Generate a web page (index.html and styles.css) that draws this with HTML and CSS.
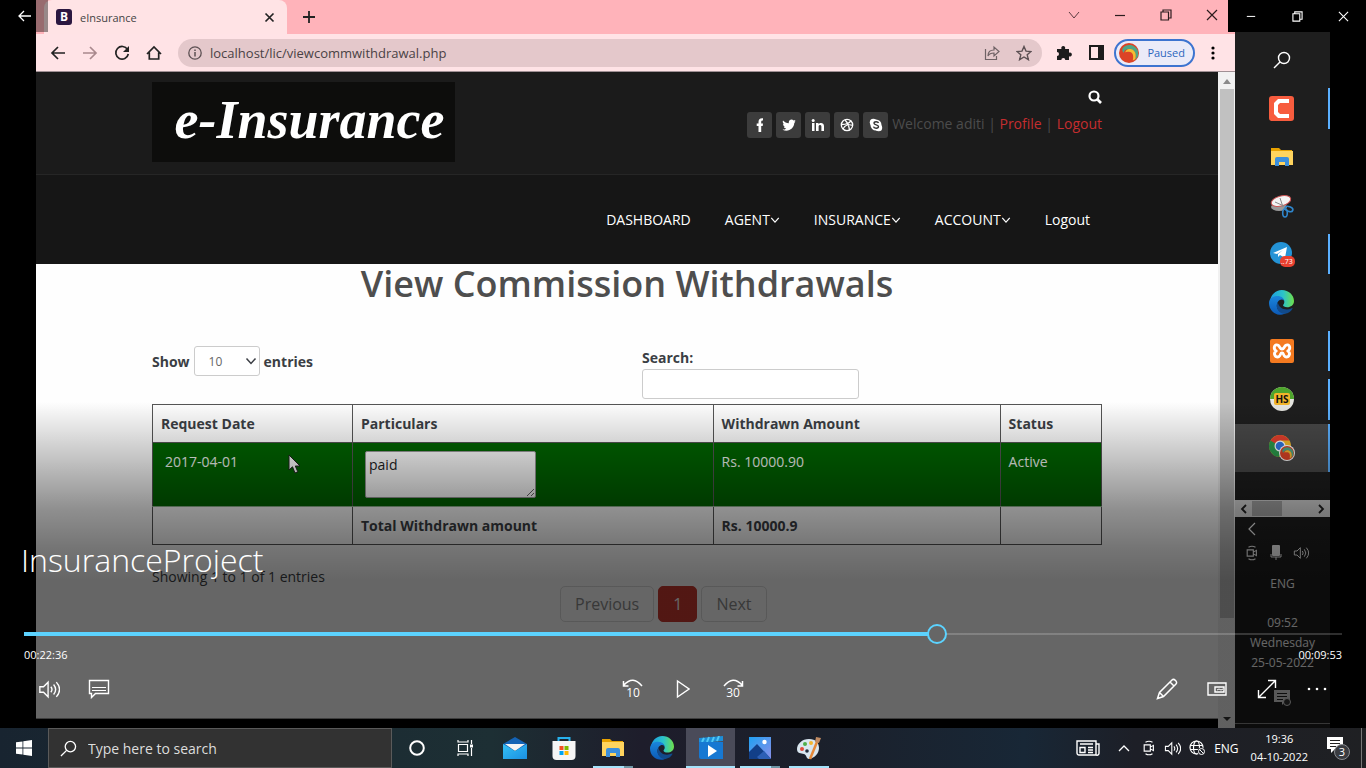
FILE: styles.css
```css
* { box-sizing: border-box; }
body {
  margin: 0;
  height: 100vh;
  display: flex;
  flex-direction: column;
  overflow: hidden;
  background: #000;
  font-family: "Open Sans", "Noto Sans", sans-serif;
  font-size: 14px;
}
button, input, select, textarea { font: inherit; color: inherit; margin: 0; }
svg { display: block; flex: none; }
a { text-decoration: none; }
.defs { position: absolute; width: 0; height: 0; }
.plain {
  border: 0;
  padding: 0;
  background: none;
  display: grid;
  place-items: center;
}

.stage {
  position: relative;
  flex: 1;
  min-height: 0;
  display: flex;
  padding: 0 36px;
}

/* Recorded browser window */
.browser {
  position: relative;
  flex: 1;
  min-width: 0;
  display: flex;
  flex-direction: column;
}
.tabstrip {
  display: flex;
  height: 34px;
  background: #ffb3ba;
  padding-left: 8px;
}
.tab {
  display: flex;
  align-items: center;
  gap: 8px;
  width: 243px;
  padding: 0 12px;
  background: #ffe3e5;
  border-radius: 8px 8px 0 0;
  font-size: 11px;
  color: #444;
}
.favicon {
  width: 16px;
  height: 16px;
  border-radius: 3px;
  background: #2b1740;
  color: #fff;
  font-size: 12px;
  font-weight: 700;
  line-height: 16px;
  text-align: center;
}
.tab-title { flex: 1; }
.newtab { width: 44px; }
.winbtns { display: flex; margin-left: auto; color: #2c1c1e; padding-bottom: 4px; }
.winbtns button { width: 46px; }
.toolbar {
  display: flex;
  align-items: center;
  height: 38px;
  padding: 0 12px 0 6px;
  background: #ffe3e6;
  border-bottom: 1px solid #a09094;
}
.nav-btn { width: 32px; height: 32px; }
.address {
  flex: 1;
  display: flex;
  align-items: center;
  gap: 8px;
  height: 28px;
  margin: 0 6px 0 8px;
  padding: 0 10px;
  border-radius: 14px;
  background: #e4c8cb;
}
.address .star { margin-left: 8px; }
.url { flex: 1; display: flex; }
.url input { flex: 1; border: 0; padding: 0; background: none; color: #4a4245; font-size: 13px; }
.profile {
  display: flex;
  align-items: center;
  gap: 8px;
  height: 28px;
  margin: 0 8px 0 2px;
  padding: 0 8px 0 3px;
  border: 2px solid #3d74d0;
  border-radius: 14px;
  background: #ebebf8;
  color: #2c66be;
  font-size: 11px;
}
.menu { width: 20px; }

.viewport { flex: 1; min-height: 0; display: flex; }
.page {
  flex: 1;
  margin-bottom: 9px;
  border-bottom: 1px solid #999;
  background: #fefefe;
  color: #3b3e44;
}
.container { max-width: 950px; margin: 0 auto; }
.site-top { background: #1b1b1b; border-bottom: 1px solid #262626; }
.top-row { display: flex; justify-content: space-between; padding: 10px 0 12px; }
.logo {
  width: 303px;
  height: 80px;
  padding-left: 12px;
  background: #0d0d0c;
  color: #fff;
  font: italic 700 54px/76px "Liberation Serif", serif;
  text-align: center;
}
.top-right {
  display: flex;
  flex-direction: column;
  align-items: flex-end;
  gap: 8px;
  padding-top: 8px;
  color: #4c4c4c;
}
.account { display: flex; align-items: center; gap: 4px; }
.account span { line-height: 20px; padding-bottom: 2px; }
.account span a { color: #c52d2f; }
.social {
  width: 25px;
  height: 26px;
  display: grid;
  place-items: center;
  border-radius: 3px;
  background: #3c3c3c;
}
.site-nav { background: #161616; }
.nav-row {
  display: flex;
  justify-content: flex-end;
  align-items: center;
  gap: 34px;
  height: 89px;
  padding-right: 12px;
}
.nav-row a { display: flex; align-items: center; color: #fff; }
.title {
  margin: 0;
  font-size: 36px;
  font-weight: 600;
  line-height: 40px;
  text-align: center;
  color: #4e4e4e;
}
.filters {
  display: grid;
  grid-template-columns: 1fr 1fr;
  gap: 30px;
  padding-top: 42px;
  font-weight: 700;
}
.length { display: flex; align-items: center; gap: 4px; height: 30px; }
.select-box { display: grid; align-items: center; width: 66px; font-weight: 400; }
.select-box > * { grid-area: 1 / 1; }
.select-box svg { justify-self: end; margin-right: 3px; pointer-events: none; }
.select-box select {
  appearance: none;
  height: 30px;
  padding-left: 14px;
  border: 1px solid #ccc;
  border-radius: 3px;
  background: #fff;
  color: #666;
  font-size: 12px;
}
.search { display: flex; flex-direction: column; line-height: 23px; }
.search input {
  width: 217px;
  height: 30px;
  border: 1px solid #ccc;
  border-radius: 3px;
  background: #fff;
}
.records {
  width: 100%;
  margin-top: 5px;
  border-collapse: collapse;
  table-layout: fixed;
  line-height: 21px;
}
.c-date { width: 200px; }
.c-part { width: 38%; }
.c-amount { width: 287px; }
.records th, .records td {
  height: 38px;
  padding: 8px;
  border: 1px solid #555;
  text-align: left;
  vertical-align: top;
}
.records tbody tr { background: #006400; color: #f0f5f0; }
.records td { border-top-color: #b5d0b5; border-bottom-color: #8fb58f; }
.records .date { padding-left: 12px; }
.records .note { padding-left: 12px; }
.records textarea {
  display: block;
  width: 171px;
  height: 47px;
  padding: 2px 3px;
  border: 1px solid #999;
  border-radius: 2px;
  background: #fff;
  color: #222;
}
.footer {
  display: grid;
  grid-template-columns: 400px 1fr;
  gap: 8px;
  padding-top: 22px;
}
.footer p { margin: 0; line-height: 20px; }
.pager { display: flex; gap: 4px; padding-top: 19px; }
.pager button {
  height: 36px;
  padding: 0 14px;
  border: 1px solid #ddd;
  border-radius: 5px;
  background: none;
  color: #8c8c8c;
  font-size: 16px;
}
.pager .current { border-color: #cc3a30; background: #cc3a30; color: #fff; }
.scroll {
  width: 17px;
  display: flex;
  flex-direction: column;
  align-items: center;
  background: #f1f1f1;
}
.scroll-thumb { flex: 1; width: 14px; margin-bottom: 93px; background: #c1c1c1; }
.pointer { position: absolute; left: 252px; top: 454px; }

/* Recorded vertical taskbar */
.rail {
  width: 95px;
  display: flex;
  flex-direction: column;
  padding-top: 36px;
  background: #1e1e1e;
  color: #fff;
  font-size: 12px;
}
.rail-apps { display: grid; grid-auto-rows: 1fr; height: 436px; }
.rail-apps span { display: grid; place-items: center; border-right: 2px solid transparent; margin: 4px 0; }
.rail-apps .open { border-right-color: #5bb0ff; }
.rail-apps .active { background: #484848; margin: 0; }
.badge-text { fill: #fff; font-size: 7px; }
.hs-text { fill: #111; font-size: 10px; font-weight: 700; text-anchor: middle; }
.rail-scroll {
  display: flex;
  align-items: center;
  height: 17px;
  margin-top: 28px;
  padding: 0 5px;
  background: #ddd;
}
.rail-scroll i { width: 30px; height: 15px; margin: 0 auto 0 4px; background: #aaa; }
.rail-tray {
  flex: 1;
  display: flex;
  flex-direction: column;
  align-items: center;
  margin-bottom: 4px;
  padding-top: 5px;
  border-bottom: 1px solid #888;
}
.rail-tray .collapse { align-self: flex-start; margin-left: 12px; }
.rail-icons { display: flex; align-items: center; gap: 11px; padding: 9px 12px 13px 0; }
.rail-lang { line-height: 20px; }
.rail-clock { padding: 19px 0 16px; line-height: 20px; text-align: center; }

/* Overlaid window caption and player controls */
.captionbar {
  position: absolute;
  inset: 0 0 auto 0;
  height: 32px;
  display: flex;
  justify-content: space-between;
  color: #fff;
}
.cap-back { width: 48px; border: 0; padding: 0; display: grid; place-items: center; background: rgba(0, 0, 0, .4); }
.cap-win { display: flex; background: #000; }
.cap-win button { width: 46px; }
.player {
  position: absolute;
  inset: auto 0 0 0;
  height: 326px;
  display: flex;
  flex-direction: column;
  justify-content: flex-end;
  padding: 0 24px 14px;
  color: #fff;
  background: linear-gradient(transparent 0, rgba(0, 0, 0, .44) 108px, rgba(0, 0, 0, .54) 146px, rgba(0, 0, 0, .6) 178px);
}
.player h2 { margin: 0 0 42px -3px; font-size: 32px; font-weight: 300; line-height: 44px; }
.seek {
  appearance: none;
  width: 100%;
  height: 20px;
  background:
    linear-gradient(#5cd3ff, #5cd3ff) left center / calc(var(--played) - 10px) 4px no-repeat,
    linear-gradient(90deg, transparent var(--played), rgba(255, 255, 255, .18) var(--played)) center / 100% 2px no-repeat;
}
.seek::-webkit-slider-thumb {
  appearance: none;
  width: 20px;
  height: 20px;
  border: 2px solid #5cd3ff;
  border-radius: 50%;
  background: #666;
}
.times { display: flex; justify-content: space-between; padding-top: 2px; font-size: 11px; line-height: 18px; }
.controls { display: grid; grid-template-columns: 1fr auto 1fr; }
.controls div { display: flex; }
.controls div:last-child { justify-content: flex-end; }
.controls button { width: 50px; height: 50px; }
.skip { fill: #fff; font-size: 12px; text-anchor: middle; }

/* Desktop taskbar */
.taskbar {
  height: 40px;
  display: flex;
  color: #fff;
  font-size: 12px;
  background: linear-gradient(90deg, #182430, #1d2f34 36%, #1e1d2b 47%, #1b202b 60%, #182736 75%, #1d1f27 83%, #1f2023);
}
.taskbar button { border: 0; padding: 0; background: none; display: grid; place-items: center; }
.taskbar .start { width: 48px; }
.find {
  width: 344px;
  display: flex;
  align-items: center;
  gap: 11px;
  padding-left: 11px;
  border: 1px solid #5a5a5a;
  background: #323232;
}
.find input { flex: 1; border: 0; padding: 0; background: none; font-size: 14px; }
.find input::placeholder { color: #ddd; opacity: 1; }
.apps { display: flex; }
.taskbar .apps button { width: 49px; }
.taskbar .apps .run { background: linear-gradient(#a5e3fb, #a5e3fb) center bottom / 40px 2px no-repeat; }
.taskbar .apps .multi { background: linear-gradient(90deg, #a5e3fb 31px, #6f96a5 31px) center bottom / 40px 2px no-repeat; }
.taskbar .apps .focus { background: linear-gradient(#a5e3fb, #a5e3fb) center bottom / 100% 2px no-repeat #4a4b59; }
.tray { display: flex; align-items: center; gap: 8px; margin-left: auto; padding-right: 4px; }
.tray .up { margin: 0 4px 0 10px; }
.clock { padding-left: 4px; font-size: 11px; line-height: 18px; text-align: center; }
.taskbar .notes { width: 46px; height: 40px; border-right: 1px solid #777; }
.count { fill: #fff; font-size: 11px; text-anchor: middle; }
```

FILE: index.html
```html
<!DOCTYPE html>
<html lang="en">
<head>
<meta charset="utf-8">
<title>InsuranceProject</title>
<link rel="stylesheet" href="styles.css">
</head>
<body>
<svg class="defs" aria-hidden="true">
  <defs>
    <linearGradient id="g-edge" x1="0" y1="0" x2="1" y2="0"><stop offset="0" stop-color="#1b9de2"/><stop offset=".55" stop-color="#2cc3c9"/><stop offset="1" stop-color="#6fe04a"/></linearGradient>
    <linearGradient id="g-edge2" x1="0" y1="0" x2="0" y2="1"><stop offset="0" stop-color="#1a86dd"/><stop offset="1" stop-color="#0c59b5"/></linearGradient>
    <linearGradient id="g-mail" x1="0" y1="0" x2="1" y2="1"><stop offset="0" stop-color="#35c1f5"/><stop offset="1" stop-color="#1a8fe0"/></linearGradient>
    <linearGradient id="g-photo" x1="0" y1="0" x2="1" y2="1"><stop offset="0" stop-color="#1fa0f2"/><stop offset="1" stop-color="#8b8fe8"/></linearGradient>
    <symbol id="edge" viewBox="0 0 24 24">
      <path d="M1 11C1.500 5 6 0 12.300 0 19 0 24 5 24 10.500c0 4-3.200 6-6.500 6-2.500 0-4-1-4-1.800 0-.7 1.200-1.200 1.200-3.200C14.700 8.500 11.500 6.500 8 6.500 4.500 6.500 2 8.500 1 11z" fill="url(#g-edge)"/>
      <path d="M0 12.500C0 8.500 3.500 5.800 8 5.800c4.200 0 6.900 2.900 6.900 5.600 0-1.300-1.200-2.400-2.700-2.400-2.500 0-4.700 2.700-4.700 6 0 4.500 4.500 7.300 9 6.700-1.300 1.300-2.900 2.100-5 2.100C5 23.800 0 19 0 12.500z" fill="url(#g-edge2)"/>
      <path d="M8.500 11.500c-3 5.500 1 11.700 7 11.400 2.800-.2 5.500-2 7-4.800.3-.6-.2-.9-.7-.6-5.300 2.700-12.600.6-13.300-6z" fill="#114a8b"/>
    </symbol>
    <symbol id="folder" viewBox="0 0 24 20">
      <path d="M1 1h8l2 2h11v4H1z" fill="#e8a200"/><path d="M1 4h22v14H1z" fill="#ffd45e"/>
      <path d="M5 19v-7a2 2 0 0 1 2-2h10a2 2 0 0 1 2 2v7h-4v-4H9v4z" fill="#3c8fdc"/>
    </symbol>
    <symbol id="speaker" viewBox="0 0 24 20">
      <path d="M2 7h4l5-5v16l-5-5H2zM14 7q2.500 3 0 6M17 4.500q4.500 5.500 0 11M20 2q7 8 0 16" fill="none" stroke="currentColor" stroke-width="1.500"/>
    </symbol>
    <symbol id="meet" viewBox="0 0 16 18">
      <path d="M2.500 5.500h7v7h-7zM9.500 8l3.500-2v6l-3.500-2M4 2.500q4-2.500 8 0M4 15.500q4 2.500 8 0" fill="none" stroke="currentColor" stroke-width="1.300"/>
    </symbol>
    <symbol id="loupe" viewBox="0 0 18 18">
      <circle cx="11" cy="7" r="5.500" fill="none" stroke="currentColor" stroke-width="1.400"/><path d="M7 11l-6 6" stroke="currentColor" stroke-width="1.400"/>
    </symbol>
    <symbol id="swirl" viewBox="0 0 16 16">
      <circle cx="8" cy="8" r="8" fill="#dc4326"/><path d="M3 4C6 0 13 1 15 6c1 4 0 6-2 7 1-5-1-8-5-8-3 0-4 1-4 3C3 7 2 6 3 4z" fill="#4fa686"/><path d="M5 8c0-2 2-4 5-3s4 4 3 8l-2 1c1-4 0-7-3-7-2 0-3 0-3 1z" fill="#f5bd31"/>
    </symbol>
    <symbol id="restore" viewBox="0 0 12 12"><path d="M1 3h7.500v8H1zM3 3V1h8v8H8.500" fill="none" stroke="currentColor" stroke-width="1.200"/></symbol>
    <symbol id="cross" viewBox="0 0 12 12"><path d="M1 1l10 10M11 1L1 11" stroke="currentColor" stroke-width="1.200"/></symbol>
    <symbol id="minus" viewBox="0 0 12 12"><path d="M1 6.500h10" stroke="currentColor" stroke-width="1.200"/></symbol>
    <symbol id="chevron" viewBox="0 0 12 12"><path d="M1.500 3.500L6 8.500l4.500-5" fill="none" stroke="currentColor" stroke-width="1.500"/></symbol>
  </defs>
</svg>

<main class="stage">
  <section class="browser">
    <div class="tabstrip">
      <div class="tab">
        <span class="favicon">B</span><span class="tab-title">eInsurance</span>
        <button class="plain" aria-label="Close tab"><svg width="11" height="11" viewBox="0 0 11 11"><path d="M1.500 1.500l8 8M9.500 1.500l-8 8" stroke="#222" stroke-width="1.700"/></svg></button>
      </div>
      <button class="plain newtab" aria-label="New tab"><svg width="14" height="14" viewBox="0 0 14 14"><path d="M7 1v12M1 7h12" stroke="#222" stroke-width="1.800"/></svg></button>
      <div class="winbtns">
        <button class="plain" aria-label="Tab search"><svg width="12" height="12" viewBox="0 0 12 12"><path d="M1 3l5 6 5-6" fill="none" stroke="#5b3c40"/></svg></button>
        <button class="plain" aria-label="Minimize"><svg width="12" height="12"><use href="#minus"/></svg></button>
        <button class="plain" aria-label="Restore"><svg width="12" height="12"><use href="#restore"/></svg></button>
        <button class="plain" aria-label="Close"><svg width="12" height="12"><use href="#cross"/></svg></button>
      </div>
    </div>
    <div class="toolbar">
      <button class="plain nav-btn" aria-label="Back"><svg width="16" height="16" viewBox="0 0 16 16"><path d="M15 8H2M8 2L2 8l6 6" fill="none" stroke="#222" stroke-width="1.700"/></svg></button>
      <button class="plain nav-btn" aria-label="Forward"><svg width="16" height="16" viewBox="0 0 16 16"><path d="M1 8h13M8 2l6 6-6 6" fill="none" stroke="#a9898d" stroke-width="1.700"/></svg></button>
      <button class="plain nav-btn" aria-label="Reload"><svg width="16" height="16" viewBox="0 0 16 16"><path d="M13.500 4.500A6.300 6.300 0 1 0 14.300 9" fill="none" stroke="#222" stroke-width="1.700"/><path d="M15 1v6H9z" fill="#222"/></svg></button>
      <button class="plain nav-btn" aria-label="Home"><svg width="16" height="16" viewBox="0 0 16 16"><path d="M1 9l7-7 7 7M3.300 7.500V14h9.400V7.500" fill="none" stroke="#222" stroke-width="1.700"/></svg></button>
      <div class="address">
        <svg width="14" height="14" viewBox="0 0 14 14"><circle cx="7" cy="7" r="6.200" fill="none" stroke="#5c5053" stroke-width="1.300"/><path d="M7 6v4.500M7 3.500V5" stroke="#5c5053" stroke-width="1.500"/></svg>
        <label class="url"><input type="text" aria-label="Address" value="localhost/lic/viewcommwithdrawal.php"></label>
        <svg width="16" height="16" viewBox="0 0 16 16"><path d="M1.500 4v10.500h11V11M4 11c0-4 2-6 6-6V2l5 4.500-5 4.500V8c-3 0-5 1-6 3z" fill="none" stroke="#6f6265" stroke-width="1.200"/></svg>
        <svg class="star" width="16" height="16" viewBox="0 0 16 16"><path d="M8 1.500l2 4.600 5 .4-3.800 3.300 1.200 4.900L8 12l-4.400 2.700 1.200-4.900L1 6.500l5-.4z" fill="none" stroke="#5c5053" stroke-width="1.400"/></svg>
      </div>
      <button class="plain nav-btn" aria-label="Extensions"><svg width="16" height="16" viewBox="0 0 16 16"><path d="M1 4h4.500a2 2 0 1 1 3.500 0H13v3.700a2 2 0 1 1 0 3.600V15H9.300a2 2 0 0 0-4 0H1v-4a2 2 0 0 0 0-4z" fill="#1c1c1c"/></svg></button>
      <button class="plain nav-btn" aria-label="Side panel"><svg width="15" height="15" viewBox="0 0 15 15"><path d="M1 1h13v13H1z" fill="none" stroke="#1c1c1c" stroke-width="2"/><path d="M9 1h5v13H9z" fill="#1c1c1c"/></svg></button>
      <button class="profile"><svg width="20" height="20"><use href="#swirl"/></svg>Paused</button>
      <button class="plain menu" aria-label="Menu"><svg width="4" height="16" viewBox="0 0 4 16"><circle cx="2" cy="3" r="1.600"/><circle cx="2" cy="8" r="1.600"/><circle cx="2" cy="13" r="1.600"/></svg></button>
    </div>

    <div class="viewport">
      <div class="page">
        <header class="site-top">
          <div class="container top-row">
            <a class="logo" href="#">e-Insurance</a>
            <div class="top-right">
              <button class="plain" aria-label="Search"><svg width="14" height="14" viewBox="0 0 14 14"><circle cx="6" cy="6" r="4.500" fill="none" stroke="#fff" stroke-width="2.200"/><path d="M9 9l4 4" stroke="#fff" stroke-width="2.600"/></svg></button>
              <div class="account">
                <a class="social" href="#" aria-label="Facebook"><svg width="14" height="14" viewBox="0 0 14 14"><path d="M5.500 14V8H3.700V5.500h1.800V4c0-2.600 1.300-4 4.500-3.700v2.200C8.600 2.500 8.200 2.800 8.200 4v1.500H10L9.700 8H8.200v6z" fill="#fff"/></svg></a>
                <a class="social" href="#" aria-label="Twitter"><svg width="14" height="14" viewBox="0 0 14 14"><path d="M1 2.500c1.500 1.700 3.500 2.600 5.800 2.700C6.300 1.500 10 .5 11.600 2.500L13.500 2l-1 1.800 1-.2-1.200 1.500C12 11 6 14.500.5 11.700c1.500 0 2.800-.4 3.700-1.200-1.200-.2-2-.9-2.400-1.800h1C1.600 8 1 7 1 6l1 .2C.8 5 .4 4 1 2.500z" fill="#fff"/></svg></a>
                <a class="social" href="#" aria-label="LinkedIn"><svg width="14" height="14" viewBox="0 0 14 14"><path d="M1 5h2.500v8H1zM5 5h2.500v1.200C9 4 13 4.500 13 8v5h-2.600V8.500c0-2-2.800-2-2.800 0V13H5z" fill="#fff"/><circle cx="2.200" cy="2.500" r="1.500" fill="#fff"/></svg></a>
                <a class="social" href="#" aria-label="Dribbble"><svg width="14" height="14" viewBox="0 0 14 14"><g fill="none" stroke="#fff" stroke-width="1.300"><circle cx="7" cy="7" r="5.700"/><path d="M5 2c3 3 4 6 4.500 10M1.500 6.500c5 0 8-1 9.500-4M3 11c2-4 6-5 9.700-3.500"/></g></svg></a>
                <a class="social" href="#" aria-label="Skype"><svg width="14" height="14" viewBox="0 0 14 14"><circle cx="7" cy="7" r="5.500" fill="#fff"/><circle cx="4.300" cy="4.300" r="3.500" fill="#fff"/><circle cx="9.700" cy="9.700" r="3.500" fill="#fff"/><path d="M9.500 5C9 3.300 5 3.300 5 5.300c0 2 4.500 1.200 4.500 3.300S5 10.700 4.500 8.700" fill="none" stroke="#333" stroke-width="1.400"/></svg></a>
                <span>Welcome aditi | <a href="#">Profile</a> | <a href="#">Logout</a></span>
              </div>
            </div>
          </div>
        </header>
        <nav class="site-nav">
          <div class="container nav-row">
            <a href="#">DASHBOARD</a>
            <a href="#">AGENT<svg width="10" height="10"><use href="#chevron"/></svg></a>
            <a href="#">INSURANCE<svg width="10" height="10"><use href="#chevron"/></svg></a>
            <a href="#">ACCOUNT<svg width="10" height="10"><use href="#chevron"/></svg></a>
            <a href="#">Logout</a>
          </div>
        </nav>
        <div class="container">
          <h1 class="title">View Commission Withdrawals</h1>
          <div class="filters">
            <label class="length">Show
              <span class="select-box"><select><option>10</option></select><svg width="12" height="12"><use href="#chevron"/></svg></span>
              entries</label>
            <label class="search">Search:<input type="search"></label>
          </div>
          <table class="records">
            <colgroup><col class="c-date"><col class="c-part"><col class="c-amount"><col></colgroup>
            <thead><tr><th>Request Date</th><th>Particulars</th><th>Withdrawn Amount</th><th>Status</th></tr></thead>
            <tbody><tr><td class="date">2017-04-01</td><td class="note"><textarea aria-label="Particulars">paid</textarea></td><td>Rs. 10000.90</td><td>Active</td></tr></tbody>
            <tfoot><tr><th></th><th>Total Withdrawn amount</th><th>Rs. 10000.9</th><th></th></tr></tfoot>
          </table>
          <div class="footer">
            <p>Showing 1 to 1 of 1 entries</p>
            <div class="pager"><button>Previous</button><button class="current">1</button><button>Next</button></div>
          </div>
        </div>
      </div>
      <div class="scroll">
        <svg width="10" height="17" viewBox="0 0 10 17"><path d="M1 12l4-5 4 5z" fill="#8a8a8a"/></svg>
        <div class="scroll-thumb"></div>
        <svg width="10" height="17" viewBox="0 0 10 17"><path d="M1 6l4 4 4-4z" fill="#333"/></svg>
      </div>
    </div>
    <svg class="pointer" width="13" height="21" viewBox="0 0 13 21"><path d="M1 1v15l3.500-3.200L7 19l2.800-1.200L7.300 12H12z" fill="#fff" stroke="#222"/></svg>
  </section>

  <aside class="rail">
    <div class="rail-apps">
      <span><svg width="18" height="18"><use href="#loupe"/></svg></span>
      <span class="open"><svg width="25" height="25" viewBox="0 0 25 25"><rect width="25" height="25" rx="3" fill="#f75c3e"/><path d="M20 3H9L5 7v11l4 4h11v-4h-9l-2-2V9l2-2h9z" fill="#fff"/></svg></span>
      <span><svg width="24" height="20"><use href="#folder"/></svg></span>
      <span><svg width="24" height="24" viewBox="0 0 24 24"><ellipse cx="9" cy="13" rx="8" ry="4" fill="#999"/><ellipse cx="11" cy="7" rx="10" ry="5" fill="#f4f4f4" stroke="#c55" transform="rotate(-15 11 7)"/><path d="M10 4l3 9M5 8l9 4" stroke="#888"/><g fill="none" stroke="#2f86cc" stroke-width="1.600"><ellipse cx="19" cy="15" rx="4" ry="2.300" transform="rotate(20 19 15)"/><ellipse cx="15" cy="19" rx="2.300" ry="4"/></g></svg></span>
      <span class="open"><svg width="26" height="26" viewBox="0 0 26 26"><circle cx="12" cy="12" r="11" fill="#2493d6"/><path d="M4 12l14-6-2 11-5-3-2 2v-3l5-4-6 4z" fill="#fff"/><rect x="11" y="15" width="15" height="11" rx="5" fill="#e9402f"/><text x="12" y="23" class="badge-text">..73</text></svg></span>
      <span><svg width="25" height="25"><use href="#edge"/></svg></span>
      <span class="open"><svg width="24" height="24" viewBox="0 0 24 24"><rect width="24" height="24" rx="2" fill="#f47a20"/><path d="M8.500 6.500C5 4 2.500 9 6 12c-3.500 3 0 7.500 3 5.500 2-1.500 1-3.500 3-3.500s1 2 3 3.500c3 2 6.500-2.500 3-5.500 3.500-3 1-8-2.500-5.500C14 8 14 10 12 10S10 8 8.500 6.500z" fill="none" stroke="#fff" stroke-width="2.800"/></svg></span>
      <span class="open"><svg width="24" height="24" viewBox="0 0 24 24"><circle cx="12" cy="12" r="12" fill="#e5e5e0"/><path d="M0 12a12 12 0 0 1 24 0z" fill="#4ea52c"/><rect x="4" y="6" width="16" height="12" rx="2" fill="#f2b52a"/><text x="12" y="16" class="hs-text">HS</text></svg></span>
      <span class="open active"><svg width="26" height="26" viewBox="0 0 26 26"><circle cx="11" cy="11" r="11" fill="#f6bd2b"/><path d="M1.500 5.500a11 11 0 0 1 19 0H11L6 13z" fill="#e6402e"/><path d="M1.500 5.500A11 11 0 0 0 10 22l5-8z" fill="#2a9a4b"/><circle cx="11" cy="11" r="5.500" fill="#fff"/><circle cx="11" cy="11" r="4.300" fill="#2f76e0"/><circle cx="18" cy="18" r="8" fill="#fff"/><svg x="11" y="11" width="14" height="14"><use href="#swirl"/></svg></svg></span>
    </div>
    <div class="rail-scroll">
      <svg width="8" height="10" viewBox="0 0 8 10"><path d="M6 1L2 5l4 4" fill="none" stroke="#222" stroke-width="1.800"/></svg>
      <i></i>
      <svg width="8" height="10" viewBox="0 0 8 10"><path d="M2 1l4 4-4 4" fill="none" stroke="#222" stroke-width="1.800"/></svg>
    </div>
    <div class="rail-tray">
      <svg class="collapse" width="10" height="14" viewBox="0 0 10 14"><path d="M8 1L2 7l6 6" fill="none" stroke="currentColor" stroke-width="1.200"/></svg>
      <div class="rail-icons"><svg width="14" height="16"><use href="#meet"/></svg><svg width="12" height="16" viewBox="0 0 12 16"><rect x="2" width="8" height="11" rx="1" fill="currentColor"/><path d="M1 9v3h10V9M6 12v3" stroke="currentColor" fill="none"/></svg><svg width="16" height="14"><use href="#speaker"/></svg></div>
      <span class="rail-lang">ENG</span>
      <div class="rail-clock">09:52<br>Wednesday<br>25-05-2022</div>
      <svg class="rail-note" width="18" height="18" viewBox="0 0 18 18"><path d="M0 1h16v12h-5l-3 3v-3H0z" fill="#ddd"/><path d="M3 4.500h10M3 7.500h10M3 10.500h6" stroke="#222"/><circle cx="13" cy="13" r="3.500" fill="#333" stroke="#ddd"/></svg>
    </div>
  </aside>

  <div class="captionbar">
    <button class="cap-back" aria-label="Back"><svg width="13" height="12" viewBox="0 0 13 12"><path d="M13 6H1M6 1L1 6l5 5" fill="none" stroke="#fff" stroke-width="1.300"/></svg></button>
    <div class="cap-win">
      <button class="plain" aria-label="Minimize window"><svg width="10" height="10"><use href="#minus"/></svg></button>
      <button class="plain" aria-label="Restore window"><svg width="11" height="11"><use href="#restore"/></svg></button>
      <button class="plain" aria-label="Close window"><svg width="11" height="11"><use href="#cross"/></svg></button>
    </div>
  </div>

  <section class="player">
    <h2>InsuranceProject</h2>
    <input class="seek" type="range" min="0" max="1949" value="1356" aria-label="Seek" style="--played:69.5%">
    <div class="times"><span>00:22:36</span><span>00:09:53</span></div>
    <div class="controls">
      <div>
        <button class="plain" aria-label="Volume"><svg width="22" height="19"><use href="#speaker"/></svg></button>
        <button class="plain" aria-label="Subtitles"><svg width="22" height="20" viewBox="0 0 22 20"><path d="M1.500 1.500h19v13h-13l-4 4v-4h-2z" fill="none" stroke="#fff" stroke-width="1.400"/><path d="M4 8.500h14M4 11.500h14" stroke="#fff" stroke-width="1.200"/></svg></button>
      </div>
      <div>
        <button class="plain" aria-label="Back 10 seconds"><svg width="24" height="28" viewBox="0 0 24 28"><path d="M3 10Q12 0 21 11M2.500 6v5h5" fill="none" stroke="#fff" stroke-width="1.500"/><text x="12" y="22" class="skip">10</text></svg></button>
        <button class="plain" aria-label="Play"><svg width="14" height="20" viewBox="0 0 14 20"><path d="M1.500 2v16L13 10z" fill="none" stroke="#fff" stroke-width="1.400"/></svg></button>
        <button class="plain" aria-label="Forward 30 seconds"><svg width="24" height="28" viewBox="0 0 24 28"><path d="M21 10Q12 0 3 11M21.500 6v5h-5" fill="none" stroke="#fff" stroke-width="1.500"/><text x="12" y="22" class="skip">30</text></svg></button>
      </div>
      <div>
        <button class="plain" aria-label="Edit"><svg width="22" height="22" viewBox="0 0 22 22"><path d="M1.500 20.500l2-6L16 2c2-2 6 2 4 4L7.500 18.500zM14 4l4 4M3.500 14.500l4 4" fill="none" stroke="#fff" stroke-width="1.500"/></svg></button>
        <button class="plain" aria-label="Mini view"><svg width="20" height="14" viewBox="0 0 20 14"><path d="M1 1h18v12H1zM8 5h9v5H8z" fill="none" stroke="#fff" stroke-width="1.400"/><path d="M10 8l2-1 2 1 2-1" fill="none" stroke="#fff"/></svg></button>
        <button class="plain" aria-label="Full screen"><svg width="20" height="20" viewBox="0 0 20 20"><path d="M2 18L18 2M11 1.500h7.500V9M1.500 11v7.500H9" fill="none" stroke="#fff" stroke-width="1.400"/></svg></button>
        <button class="plain" aria-label="More"><svg width="20" height="4" viewBox="0 0 20 4"><circle cx="2" cy="2" r="1.300" fill="#fff"/><circle cx="10" cy="2" r="1.300" fill="#fff"/><circle cx="18" cy="2" r="1.300" fill="#fff"/></svg></button>
      </div>
    </div>
  </section>
</main>

<footer class="taskbar">
  <button class="start" aria-label="Start"><svg width="16" height="16" viewBox="0 0 16 16"><path d="M0 2.300l6.500-.9v6.200H0zM7.300 1.300L16 0v7.600H7.300zM0 8.400h6.500v6.200L0 13.700zM7.300 8.400H16V16l-8.700-1.300z" fill="#fff"/></svg></button>
  <label class="find"><svg width="17" height="17"><use href="#loupe"/></svg><input type="text" placeholder="Type here to search" aria-label="Type here to search"></label>
  <div class="apps">
    <button aria-label="Cortana"><svg width="16" height="16" viewBox="0 0 16 16"><circle cx="8" cy="8" r="6.800" fill="none" stroke="#fff" stroke-width="2"/></svg></button>
    <button aria-label="Task view"><svg width="17" height="16" viewBox="0 0 17 16"><path d="M1.500 4.500h9v7h-9zM1 0v2h10V0M1 16v-2h10v2M14.500 0v4M14.500 8v8" fill="none" stroke="#fff" stroke-width="1.200"/><path d="M13 4.500h3v3h-3z" fill="#fff"/></svg></button>
    <button aria-label="Mail"><svg width="24" height="24" viewBox="0 0 24 24"><path d="M0 8l12-7 12 7v6H0z" fill="#1463b5"/><path d="M2 8h20l-10 7z" fill="#f4f4f4"/><path d="M0 8l12 7 12-7v15H0z" fill="url(#g-mail)"/></svg></button>
    <button aria-label="Store"><svg width="24" height="24" viewBox="0 0 24 24"><path d="M6.500 6V2h11v4" fill="none" stroke="#27b1ec" stroke-width="2"/><path d="M.5 5h23v15a4 4 0 0 1-4 4h-15a4 4 0 0 1-4-4z" fill="#f5f5f5"/><path d="M7.500 10h4v4h-4z" fill="#f25022"/><path d="M12.500 10h4v4h-4z" fill="#7fba00"/><path d="M7.500 15h4v4h-4z" fill="#00a4ef"/><path d="M12.500 15h4v4h-4z" fill="#ffb900"/></svg></button>
    <button class="run multi" aria-label="File Explorer"><svg width="24" height="20"><use href="#folder"/></svg></button>
    <button aria-label="Edge"><svg width="24" height="24"><use href="#edge"/></svg></button>
    <button class="run focus" aria-label="Movies and TV"><svg width="24" height="24" viewBox="0 0 24 24"><path d="M0 2L24 0v5L0 7z" fill="#1d8ed8"/><path d="M5 2L3 6M10 1L8 6M15 1l-2 5M20 0l-2 5" stroke="#50c7f5" stroke-width="2"/><path d="M0 6h24v17H2a2 2 0 0 1-2-2z" fill="#1778d2"/><path d="M9 9v12l9-6z" fill="#fff"/></svg></button>
    <button class="run multi" aria-label="Photos"><svg width="22" height="22" viewBox="0 0 22 22"><path d="M0 0h22v22H0z" fill="url(#g-photo)"/><path d="M0 15l8-8 14 15H0z" fill="#123f88"/><path d="M10 22l-2-2 7-6 7 8z" fill="#2c5fb5"/><circle cx="15.500" cy="5" r="2.200" fill="#fff"/></svg></button>
    <button class="run" aria-label="Paint"><svg width="24" height="24" viewBox="0 0 24 24"><path d="M12 3c7 0 10 4 10 9s-4 10-10 11c-3 0-2-4-5-5S0 18 0 13 5 3 12 3z" fill="#d9e6f0"/><circle cx="5" cy="13" r="2" fill="#e34b3d"/><circle cx="8" cy="8" r="2" fill="#4fae4b"/><circle cx="14" cy="7" r="2" fill="#f2b632"/><circle cx="10" cy="15" r="1.800" fill="#222c3c"/><path d="M13 23l7-17" stroke="#e5893a" stroke-width="2.500"/><path d="M18 6l1-5 5 1-2 5z" fill="#c08a62"/></svg></button>
  </div>
  <div class="tray">
    <svg width="24" height="16" viewBox="0 0 24 16"><path d="M1 1h19v14H3a2 2 0 0 1-2-2zM20 4h3v9a2 2 0 0 1-3 2M4 4h13M12 7.500h5M12 10h5M12 12.500h5M4 7.500h5v5H4z" fill="none" stroke="#fff" stroke-width="1.400"/></svg>
    <svg class="up" width="12" height="12" viewBox="0 0 12 12"><path d="M1 9l5-5 5 5" fill="none" stroke="#fff" stroke-width="1.300"/></svg>
    <svg width="14" height="16"><use href="#meet"/></svg>
    <svg width="17" height="15"><use href="#speaker"/></svg>
    <svg width="17" height="16" viewBox="0 0 17 16"><g fill="none" stroke="#fff" stroke-width="1.200"><circle cx="7.500" cy="7.500" r="6.500"/><ellipse cx="7.500" cy="7.500" rx="3" ry="6.500"/><path d="M1 5.500h13M1 9.500h13"/></g><circle cx="12.500" cy="11.500" r="4" fill="#202229"/><circle cx="12.500" cy="11.500" r="3" fill="none" stroke="#fff"/><path d="M10.500 9.500l4 4" stroke="#fff"/></svg>
    <span>ENG</span>
    <div class="clock">19:36<br>04-10-2022</div>
    <button class="notes" aria-label="Notifications"><svg width="26" height="26" viewBox="0 0 26 26"><path d="M1 2h16v12h-8l-4 4v-4H1z" fill="#fff"/><path d="M4 5.500h10M4 8.500h10M4 11.500h6" stroke="#222"/><circle cx="16" cy="17" r="7.500" fill="#3a3c41" stroke="#8a8c90"/><text x="16" y="21" class="count">3</text></svg></button>
  </div>
</footer>
</body>
</html>
```
